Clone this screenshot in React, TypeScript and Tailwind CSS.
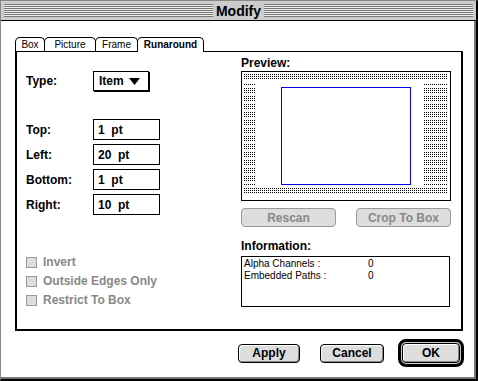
import React from 'react';

const tabs = [
  { name: 'Box', w: 'w-[30px]' },
  { name: 'Picture', w: 'w-[52px]' },
  { name: 'Frame', w: 'w-[43px]' },
  { name: 'Runaround', w: 'w-[67px]', active: true },
];

const fields = [
  { label: 'Top:', value: '1  pt' },
  { label: 'Left:', value: '20  pt' },
  { label: 'Bottom:', value: '1  pt' },
  { label: 'Right:', value: '10  pt' },
];

const checks = ['Invert', 'Outside Edges Only', 'Restrict To Box'];

const PreviewDrawing = () => (
  <svg width="208" height="128" viewBox="0 0 208 128" className="block">
    <defs>
      <pattern id="dots" width="2" height="2" patternUnits="userSpaceOnUse">
        <rect x="0" y="0" width="1" height="1" fill="#000" />
      </pattern>
      <pattern id="blocks" width="2" height="8" patternUnits="userSpaceOnUse">
        <rect x="0" y="0" width="1" height="1" fill="#000" />
        <rect x="0" y="2" width="1" height="1" fill="#000" />
        <rect x="0" y="4" width="1" height="1" fill="#000" />
      </pattern>
    </defs>
    {/* top + bottom bands */}
    <rect x="2" y="2" width="204" height="6" fill="url(#dots)" />
    <rect x="2" y="116" width="204" height="6" fill="url(#dots)" />
    {/* side bands */}
    <rect x="2" y="12" width="12" height="101" fill="url(#blocks)" />
    <rect x="182" y="12" width="24" height="101" fill="url(#blocks)" />
    {/* item bounds */}
    <rect x="39.5" y="15.5" width="129" height="97" fill="none" stroke="#0000e0" strokeWidth="1" />
  </svg>
);

const btn =
  'flex items-center justify-center rounded-[4px] border border-black bg-[#ddd] text-[12px] font-bold shadow-[inset_-1px_-1px_0_#888,inset_1px_1px_0_#fff]';

export default function App() {
  return (
    <div className="h-[381px] w-[478px] bg-[#bbb] font-['Liberation_Sans',Arial,sans-serif] text-black">
      <div className="flex h-full w-full flex-col border-b-2 border-l border-r-2 border-t border-b-black border-l-[#888] border-r-black border-t-[#888]">
        {/* title bar */}
        <div className="flex h-[20px] shrink-0 items-center border-b border-black bg-[#ccc] px-[3px]">
          <div className="h-[13px] flex-1 bg-[repeating-linear-gradient(to_bottom,#777_0_1px,#eee_1px_2px)]" />
          <div className="px-[3px] text-[14px] font-bold leading-none">Modify</div>
          <div className="h-[13px] flex-1 bg-[repeating-linear-gradient(to_bottom,#777_0_1px,#eee_1px_2px)]" />
        </div>

        {/* dialog body */}
        <div className="flex flex-1 flex-col border-b-2 border-r-2 border-[#777] bg-white pl-[14px] pt-[16px]">
          {/* tabs */}
          <div className="flex h-[14px] items-end">
            {tabs.map((t, i) => (
              <div
                key={t.name}
                className={[
                  t.w,
                  i > 0 ? '-ml-px' : '',
                  t.active
                    ? 'relative z-10 -mb-px h-[15px] bg-white font-bold'
                    : 'h-[14px] bg-white',
                  'flex items-center justify-center rounded-t-[5px] border border-b-0 border-black text-[10px] leading-none',
                ].join(' ')}
              >
                {t.name}
              </div>
            ))}
          </div>

          {/* tab panel */}
          <div className="flex h-[280px] w-[448px] border-2 border-t border-black pl-[9px]">
            {/* left column */}
            <div className="flex w-[215px] flex-col">
              <div className="mt-[19px] flex items-center">
                <div className="w-[67px] text-[12px] font-bold">Type:</div>
                <div className="flex h-[20px] w-[56px] items-center gap-[5px] border border-black pl-[5px] text-[12px] font-bold shadow-[1px_1px_0_#000]">
                  Item
                  <svg width="11" height="7" viewBox="0 0 11 7">
                    <path d="M0 0H11L5.5 7Z" fill="#000" />
                  </svg>
                </div>
              </div>

              <div className="mt-[28px] flex flex-col gap-[4px]">
                {fields.map((f) => (
                  <div key={f.label} className="flex items-center">
                    <div className="w-[67px] text-[12px] font-bold">{f.label}</div>
                    <div className="flex h-[21px] w-[67px] items-center border border-black pl-[4px] text-[12px] font-bold whitespace-pre">
                      {f.value}
                    </div>
                  </div>
                ))}
              </div>

              <div className="mt-[42px] flex flex-col gap-[8px]">
                {checks.map((c) => (
                  <div key={c} className="flex items-center gap-[6px]">
                    <div className="h-[11px] w-[11px] border border-[#999] bg-[#ddd]" />
                    <span className="text-[12px] font-bold leading-[11px] text-[#888]">{c}</span>
                  </div>
                ))}
              </div>
            </div>

            {/* right column */}
            <div className="flex w-[210px] flex-col">
              <div className="mt-[5px] text-[12px] font-bold leading-[13px]">Preview:</div>
              <div className="mt-[1px] h-[130px] w-[210px] border border-black">
                <PreviewDrawing />
              </div>

              <div className="mt-[7px] flex justify-between">
                <div className="flex h-[19px] w-[95px] items-center justify-center rounded-[4px] border border-[#999] bg-[#ddd] text-[12px] font-bold text-[#888]">
                  Rescan
                </div>
                <div className="flex h-[19px] w-[95px] items-center justify-center rounded-[4px] border border-[#999] bg-[#ddd] text-[12px] font-bold text-[#888]">
                  Crop To Box
                </div>
              </div>

              <div className="mt-[13px] text-[12px] font-bold leading-[13px]">Information:</div>
              <div className="mt-[3px] flex h-[51px] w-[209px] flex-col border border-black pl-[2px] pt-[1px] text-[10px] leading-[12px]">
                <div className="flex">
                  <span className="w-[124px]">Alpha Channels :</span>
                  <span>0</span>
                </div>
                <div className="flex">
                  <span className="w-[124px]">Embedded Paths :</span>
                  <span>0</span>
                </div>
              </div>
            </div>
          </div>

          {/* bottom buttons */}
          <div className="mt-[8px] flex w-[449px] items-center justify-end">
            <div className={`${btn} h-[19px] w-[62px]`}>Apply</div>
            <div className={`${btn} ml-[20px] h-[19px] w-[64px]`}>Cancel</div>
            <div className="ml-[14px] rounded-[8px] border-[3px] border-black bg-[#ccc] p-[1px]">
              <div className={`${btn} h-[20px] w-[58px]`}>OK</div>
            </div>
          </div>
        </div>
      </div>
    </div>
  );
}
